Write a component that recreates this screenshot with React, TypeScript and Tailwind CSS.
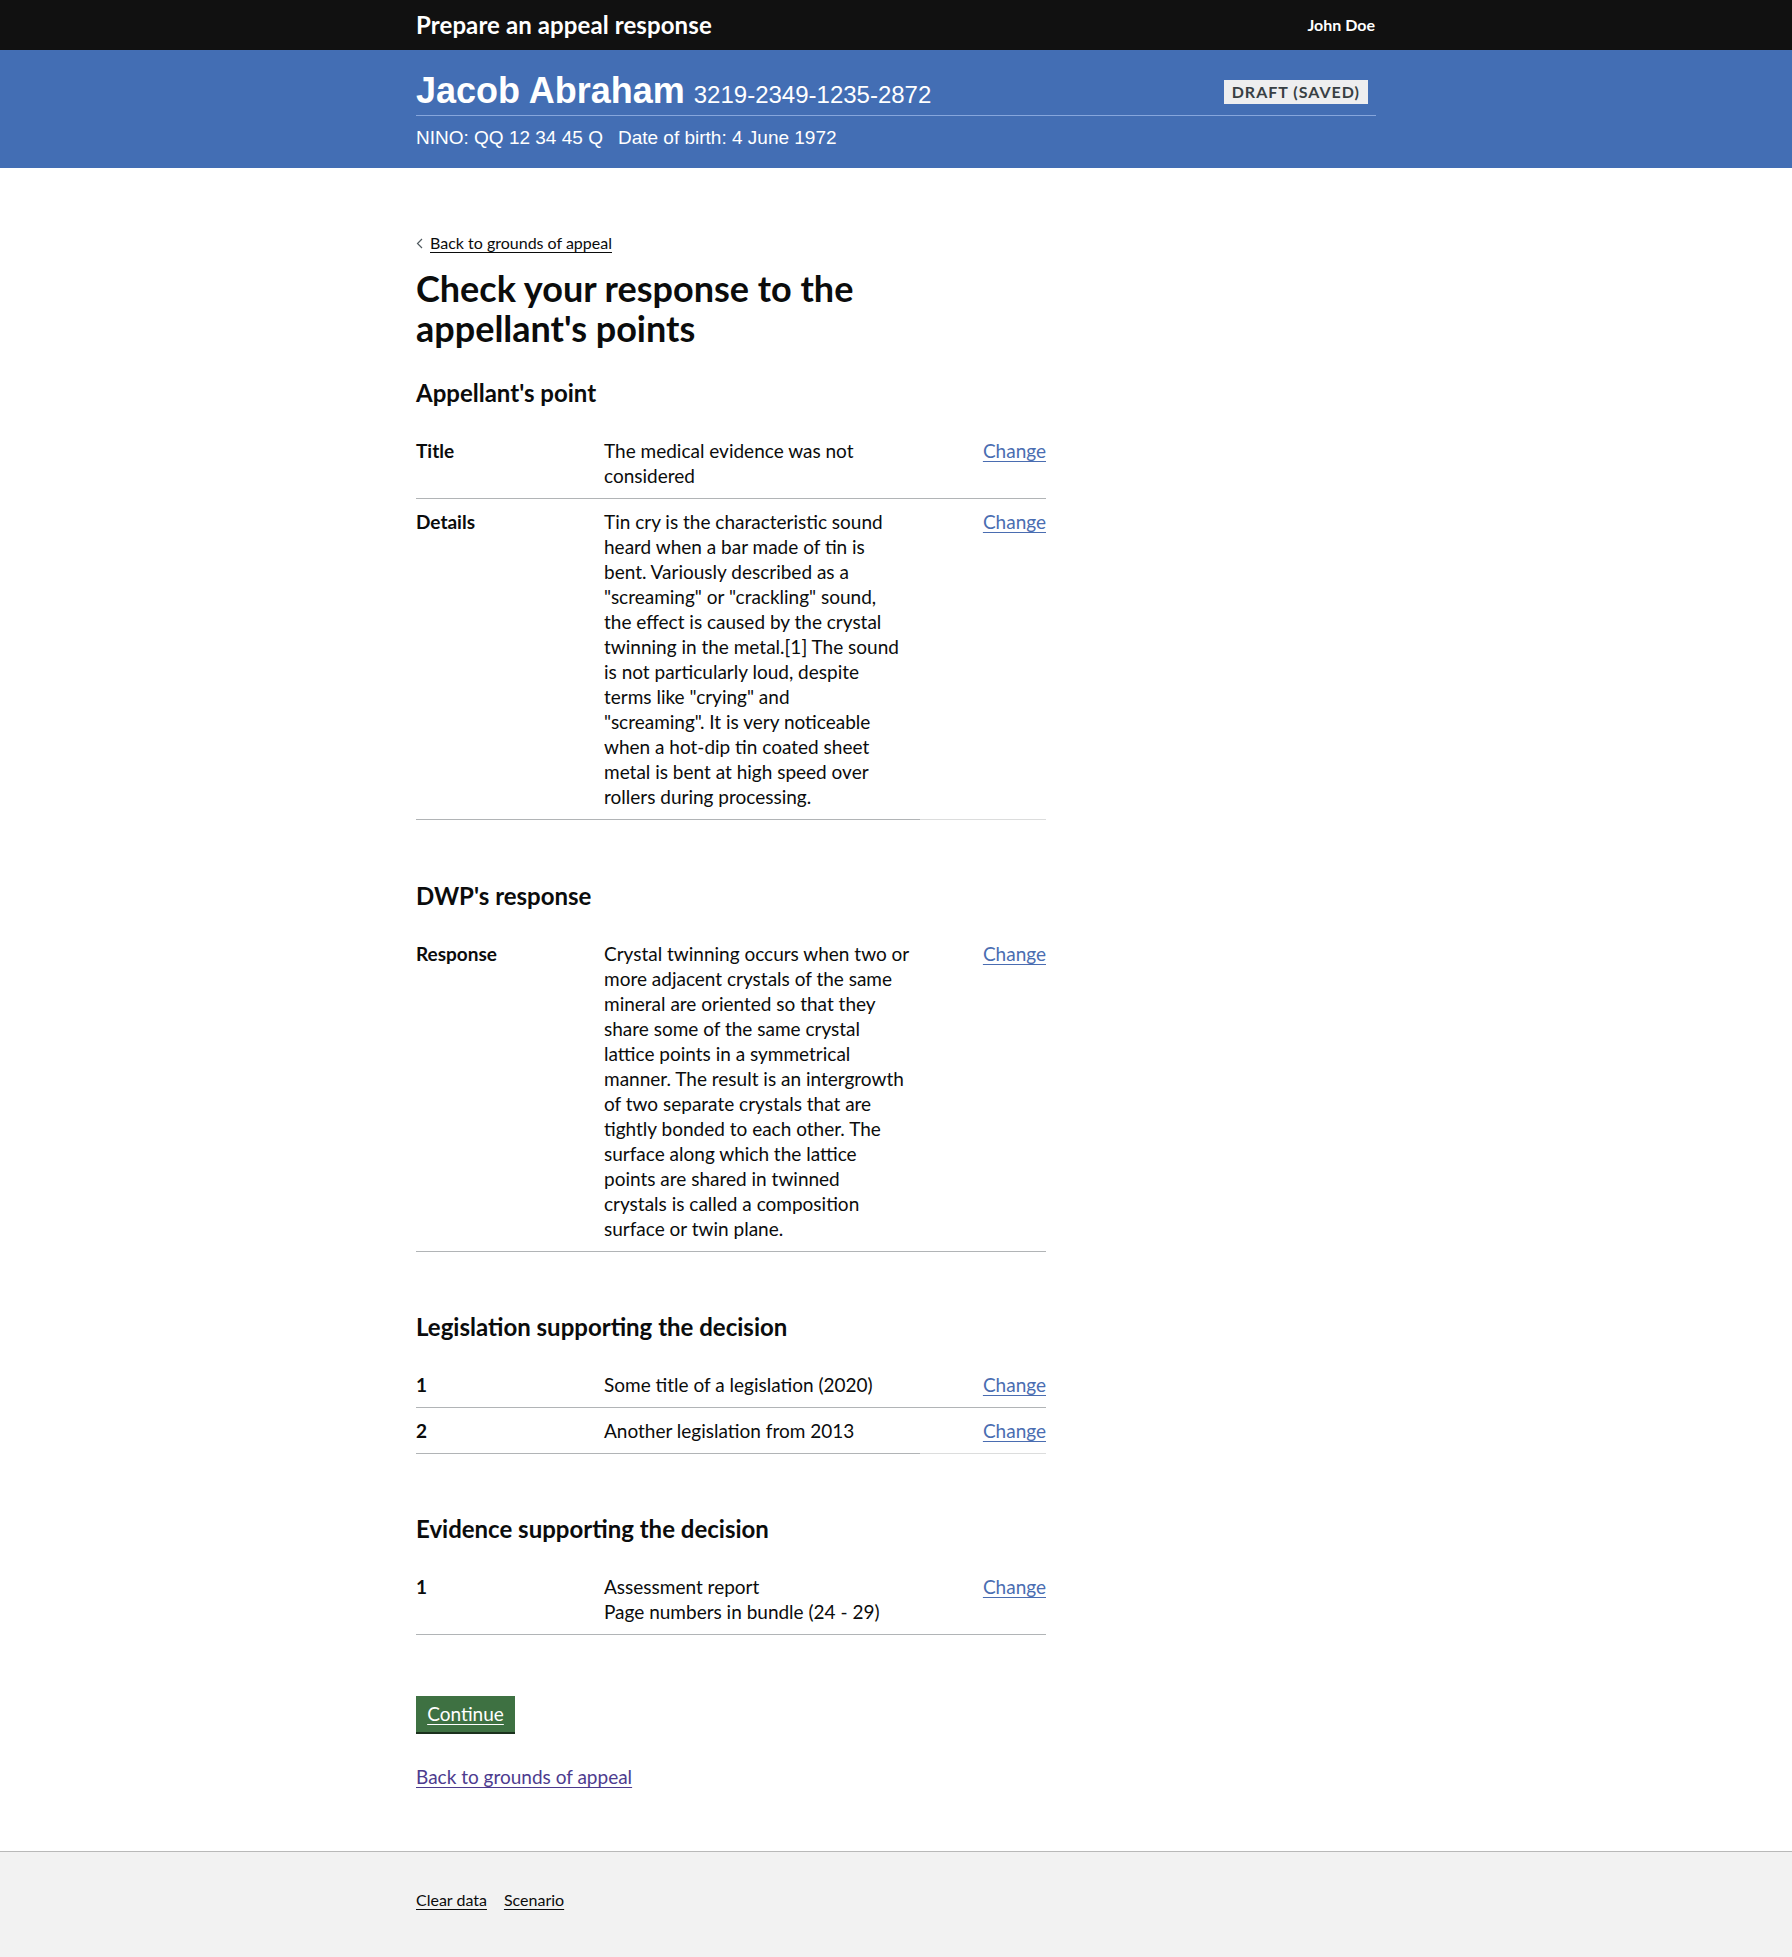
import React from 'react';

const body = { fontFamily: 'Lato, "Open Sans", sans-serif' };
const arial = { fontFamily: '"Liberation Sans", Arial, sans-serif' };

type Row = {
  key: string;
  lines: string[];
  lightAction?: boolean;
};

const appellant: Row[] = [
  { key: 'Title', lines: ['The medical evidence was not', 'considered'] },
  {
    key: 'Details',
    lightAction: true,
    lines: [
      'Tin cry is the characteristic sound',
      'heard when a bar made of tin is',
      'bent. Variously described as a',
      '"screaming" or "crackling" sound,',
      'the effect is caused by the crystal',
      'twinning in the metal.[1] The sound',
      'is not particularly loud, despite',
      'terms like "crying" and',
      '"screaming". It is very noticeable',
      'when a hot-dip tin coated sheet',
      'metal is bent at high speed over',
      'rollers during processing.',
    ],
  },
];

const dwp: Row[] = [
  {
    key: 'Response',
    lines: [
      'Crystal twinning occurs when two or',
      'more adjacent crystals of the same',
      'mineral are oriented so that they',
      'share some of the same crystal',
      'lattice points in a symmetrical',
      'manner. The result is an intergrowth',
      'of two separate crystals that are',
      'tightly bonded to each other. The',
      'surface along which the lattice',
      'points are shared in twinned',
      'crystals is called a composition',
      'surface or twin plane.',
    ],
  },
];

const legislation: Row[] = [
  { key: '1', lines: ['Some title of a legislation (2020)'] },
  { key: '2', lines: ['Another legislation from 2013'], lightAction: true },
];

const evidence: Row[] = [
  { key: '1', lines: ['Assessment report', 'Page numbers in bundle (24 - 29)'] },
];

function SummaryList({ rows }: { rows: Row[] }) {
  return (
    <dl className="w-[630px] text-[19px] leading-[25px] text-[#0b0c0c]">
      {rows.map((row, i) => (
        <div key={i} className="grid grid-cols-[188px_316px_126px]">
          <dt className="py-[10px] font-bold border-b border-[#b1b4b6]">{row.key}</dt>
          <dd className="py-[10px] border-b border-[#b1b4b6]">
            {row.lines.map((l, j) => (
              <span key={j} className="block whitespace-nowrap">
                {l}
              </span>
            ))}
          </dd>
          <dd
            className={
              row.lightAction
                ? 'py-[10px] text-right border-b border-[#dcdddd]'
                : 'py-[10px] text-right border-b border-[#b1b4b6]'
            }
          >
            <a href="#" className="text-[#4a6db1] underline underline-offset-[3px] decoration-1">
              Change
            </a>
          </dd>
        </div>
      ))}
    </dl>
  );
}

function SectionHeading({ children }: { children: React.ReactNode }) {
  return <h2 className="text-[24px] leading-[30px] font-bold text-[#0b0c0c] mb-[20px]">{children}</h2>;
}

export default function App() {
  return (
    <div className="min-h-[1957px] bg-white flex flex-col" style={body}>
      {/* top bar */}
      <header className="bg-[#111111] h-[50px]">
        <div className="w-[960px] mx-auto h-full flex items-center justify-between text-white">
          <span className="text-[24px] font-bold leading-none tracking-[0.1px]">Prepare an appeal response</span>
          <span className="text-[16px] font-bold leading-none mr-[1px]">John Doe</span>
        </div>
      </header>

      {/* appellant band */}
      <div className="bg-[#436eb4] h-[118px] text-white" style={arial}>
        <div className="w-[960px] mx-auto pt-[21px]">
          <div className="flex justify-between h-[40px] mb-[4px]">
            <div className="flex items-baseline">
              <span className="text-[36px] leading-[40px] font-bold">Jacob Abraham</span>
              <span className="text-[24px] ml-[9px]">3219-2349-1235-2872</span>
            </div>
            <span
              className="self-start mt-[9px] mr-[8px] h-[24px] px-[8px] bg-[#eeeeef] text-[#383f43] text-[16px] font-bold tracking-[1px] flex items-center"
              style={body}
            >
              DRAFT (SAVED)
            </span>
          </div>
          <div className="h-px bg-[#86a6dc]" />
          <div className="mt-[9px] text-[19px] leading-[25px] flex gap-[15px]">
            <span>NINO: QQ 12 34 45 Q</span>
            <span>Date of birth: 4 June 1972</span>
          </div>
        </div>
      </div>

      {/* main */}
      <main className="w-[960px] mx-auto pt-[65px] pb-[61px] text-[#0b0c0c] flex-1">
        <a href="#" className="flex items-center h-[20px] text-[16px] leading-[20px] text-[#0b0c0c]">
          <svg width="8" height="11" viewBox="0 0 8 11" className="mr-[6px]">
            <polyline points="6,1 1.5,5.5 6,10" fill="none" stroke="#505a5f" strokeWidth="1.2" />
          </svg>
          <span className="underline underline-offset-[3px] decoration-1">Back to grounds of appeal</span>
        </a>

        <h1 className="mt-[15px] mb-[30px] text-[36px] leading-[40px] font-bold">
          Check your response to the
          <br />
          appellant's points
        </h1>

        <SectionHeading>Appellant's point</SectionHeading>
        <SummaryList rows={appellant} />

        <div className="mt-[61px]">
          <SectionHeading>DWP's response</SectionHeading>
          <SummaryList rows={dwp} />
        </div>

        <div className="mt-[60px]">
          <SectionHeading>Legislation supporting the decision</SectionHeading>
          <SummaryList rows={legislation} />
        </div>

        <div className="mt-[60px]">
          <SectionHeading>Evidence supporting the decision</SectionHeading>
          <SummaryList rows={evidence} />
        </div>

        <button
          type="button"
          className="mt-[61px] mb-[32px] w-[99px] h-[36px] bg-[#3e7142] shadow-[0_2px_0_#1b311d] text-white text-[19px] flex items-center justify-center"
        >
          <span className="underline underline-offset-[3px] decoration-1">Continue</span>
        </button>

        <a href="#" className="block text-[19px] leading-[25px] text-[#4d3b8e] underline underline-offset-[3px] decoration-1">
          Back to grounds of appeal
        </a>
      </main>

      {/* footer */}
      <footer className="bg-[#f2f2f2] border-t border-[#b9b9b9] h-[106px]">
        <div className="w-[960px] mx-auto pt-[38px] flex gap-[17px] text-[16px] leading-[20px] text-[#0b0c0c]">
          <a href="#" className="underline underline-offset-[3px] decoration-1">Clear data</a>
          <a href="#" className="underline underline-offset-[3px] decoration-1">Scenario</a>
        </div>
      </footer>
    </div>
  );
}
